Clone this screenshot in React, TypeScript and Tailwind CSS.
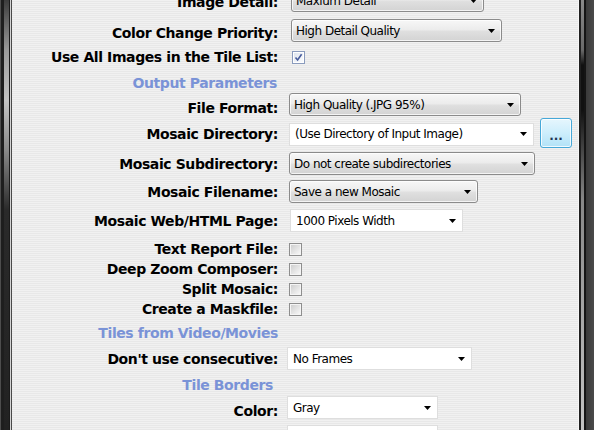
import React from "react";

const labelCls =
  "w-[266px] shrink-0 text-right font-['DejaVu_Sans',sans-serif] font-bold text-[14px] leading-[16px] tracking-[-0.4px] text-black whitespace-nowrap";
const headCls =
  "w-[266px] shrink-0 text-right font-['DejaVu_Sans',sans-serif] font-bold text-[14px] leading-[16px] tracking-[-0.4px] text-[#7a93d7] whitespace-nowrap";
const ctrlText =
  "font-['DejaVu_Sans',sans-serif] text-[12px] tracking-[-0.5px] text-black whitespace-nowrap";

function Arrow() {
  return (
    <svg width="7" height="4" viewBox="0 0 7 4" className="shrink-0">
      <polygon points="0,0 7,0 3.5,4" fill="#000" />
    </svg>
  );
}

function Select({ text, w, white }: { text: string; w: string; white?: boolean }) {
  const skin = white
    ? "border-[#dedede] bg-white pl-[5px]"
    : "rounded-[3px] border-[#8b8b8b] bg-[image:linear-gradient(to_bottom,#f7f7f7_0%,#ececec_45%,#dfdfdf_55%,#d3d3d3_100%)] shadow-[inset_0_0_0_1px_rgba(255,255,255,0.75)] pl-[4px]";
  return (
    <div className={`flex h-[23px] items-center justify-between border pr-[6px] ${skin} ${w}`}>
      <span className={ctrlText}>{text}</span>
      <Arrow />
    </div>
  );
}

function Check({ checked }: { checked?: boolean }) {
  if (checked) {
    return (
      <div className="h-[13px] w-[13px] border border-[#8a9bbd] bg-white p-[1px]">
        <div className="flex h-full w-full items-center justify-center bg-[image:linear-gradient(135deg,#dfe5ef,#fbfcfe)]">
          <svg width="9" height="9" viewBox="0 0 9 9">
            <path d="M1.5 4.5 L3.6 7 L7.6 1.2" stroke="#475c9c" strokeWidth="1.6" fill="none" />
          </svg>
        </div>
      </div>
    );
  }
  return (
    <div className="h-[13px] w-[13px] border border-[#8e8e8e] bg-[#f4f4f4] p-[1px]">
      <div className="h-full w-full bg-[image:linear-gradient(135deg,#cfcfcf,#f6f6f6)]" />
    </div>
  );
}

function Row({
  label,
  mt,
  h,
  lpt = "",
  children,
}: {
  label: string;
  mt: string;
  h: string;
  lpt?: string;
  children?: React.ReactNode;
}) {
  return (
    <div className={`flex shrink-0 items-center ${mt} ${h}`}>
      <div className={`${labelCls} ${lpt}`}>{label}</div>
      <div className="ml-[11px] flex items-center">{children}</div>
    </div>
  );
}

function Heading({ text, mt, pr = "" }: { text: string; mt: string; pr?: string }) {
  return (
    <div className={`flex h-[18px] shrink-0 items-center ${mt}`}>
      <div className={`${headCls} ${pr}`}>{text}</div>
    </div>
  );
}

export default function App() {
  return (
    <div className="flex h-[430px] w-[594px] overflow-hidden bg-[#222]">
      {/* left window frame */}
      <div className="flex h-full shrink-0">
        <div className="w-[1px] bg-[#4d4d4d]" />
        <div className="w-[3px] bg-[#1e1e1e]" />
        <div className="w-[5px] bg-[image:linear-gradient(to_bottom,#3c3c3c_0px,#9a9a9a_50px,#c4c4c4_100px,#8a8a8a_150px,#2a2a2a_210px,#222_430px)]" />
        <div className="w-[1px] bg-[#1a1a1a]" />
        <div className="w-[1px] bg-[#d4d4d4]" />
        <div className="w-[1px] bg-[#4a4a4a]" />
      </div>

      {/* settings panel */}
      <div className="flex h-full flex-1 flex-col overflow-hidden bg-[image:repeating-linear-gradient(to_bottom,#f1f1f1_0px,#f1f1f1_1px,#e8e8e8_1px,#e8e8e8_2px)]">
        <Row label="Image Detail:" mt="-mt-[11px]" h="h-[23px]" lpt="pt-[3px]">
          <div className="ml-[2px]">
            <Select text="Maxium Detail" w="w-[193px]" />
          </div>
        </Row>
        <Row label="Color Change Priority:" mt="mt-[7px]" h="h-[23px]" lpt="pt-[4px]">
          <div className="ml-[2px]">
            <Select text="High Detail Quality" w="w-[211px]" />
          </div>
        </Row>
        <Row label="Use All Images in the Tile List:" mt="mt-[6px]" h="h-[18px]">
          <div className="ml-[3px]">
            <Check checked />
          </div>
        </Row>

        <Heading text="Output Parameters" mt="mt-[8px]" pr="pr-[1px]" />

        <Row label="File Format:" mt="mt-[1px]" h="h-[23px]" lpt="pt-[6px]">
          <Select text="High Quality (.JPG 95%)" w="w-[232px]" />
        </Row>
        <Row label="Mosaic Directory:" mt="mt-[2px]" h="h-[30px]" lpt="pt-[1px]">
          <div className="mt-[2px]">
            <Select text="(Use Directory of Input Image)" w="w-[245px]" white />
          </div>
          <button className="ml-[6px] flex h-[30px] w-[32px] items-end justify-center rounded-[3px] border border-[#46a8d8] bg-[image:linear-gradient(to_bottom,#e6f6fd_0%,#cdeefc_50%,#b2e2f7_100%)] pb-[7px] shadow-[inset_0_0_0_1px_rgba(255,255,255,0.8)]">
            <span className="font-['DejaVu_Sans',sans-serif] text-[12px] font-bold leading-[8px] tracking-[0px] text-[#1e3550]">
              ...
            </span>
          </button>
        </Row>
        <Row label="Mosaic Subdirectory:" mt="mt-[4px]" h="h-[23px]">
          <Select text="Do not create subdirectories" w="w-[246px]" />
        </Row>
        <Row label="Mosaic Filename:" mt="mt-[5px]" h="h-[23px]">
          <Select text="Save a new Mosaic" w="w-[189px]" />
        </Row>
        <Row label="Mosaic Web/HTML Page:" mt="mt-[6px]" h="h-[23px]">
          <div className="ml-[1px]">
            <Select text="1000 Pixels Width" w="w-[173px]" white />
          </div>
        </Row>

        <Row label="Text Report File:" mt="mt-[8px]" h="h-[18px]">
          <Check />
        </Row>
        <Row label="Deep Zoom Composer:" mt="mt-[2px]" h="h-[18px]">
          <Check />
        </Row>
        <Row label="Split Mosaic:" mt="mt-[2px]" h="h-[18px]">
          <Check />
        </Row>
        <Row label="Create a Maskfile:" mt="mt-[2px]" h="h-[18px]">
          <Check />
        </Row>

        <Heading text="Tiles from Video/Movies" mt="mt-[6px]" />

        <Row label="Don't use consecutive:" mt="mt-[5px]" h="h-[23px]">
          <div className="-ml-[2px]">
            <Select text="No Frames" w="w-[185px]" white />
          </div>
        </Row>

        <Heading text="Tile Borders" mt="mt-[6px]" pr="pr-[5px]" />

        <Row label="Color:" mt="mt-[2px]" h="h-[23px]" lpt="pt-[6px]">
          <div className="-ml-[2px]">
            <Select text="Gray" w="w-[151px]" white />
          </div>
        </Row>
        <Row label="" mt="mt-[6px]" h="h-[23px]">
          <div className="-ml-[2px]">
            <Select text="" w="w-[151px]" white />
          </div>
        </Row>
      </div>

      {/* right window frame */}
      <div className="flex h-full shrink-0">
        <div className="w-[1px] bg-[#f6f6f6]" />
        <div className="w-[2px] bg-[#1f1f1f]" />
        <div className="w-[3px] bg-[image:linear-gradient(to_bottom,#8a8a8a_0px,#6a6a6a_50px,#111_65px,#111_110px,#888_200px,#c4c4c4_430px)]" />
        <div className="w-[2px] bg-[#151515]" />
        <div className="w-[8px] bg-[image:linear-gradient(to_right,#3a3a3a,#4a4a4a)]" />
      </div>
    </div>
  );
}
